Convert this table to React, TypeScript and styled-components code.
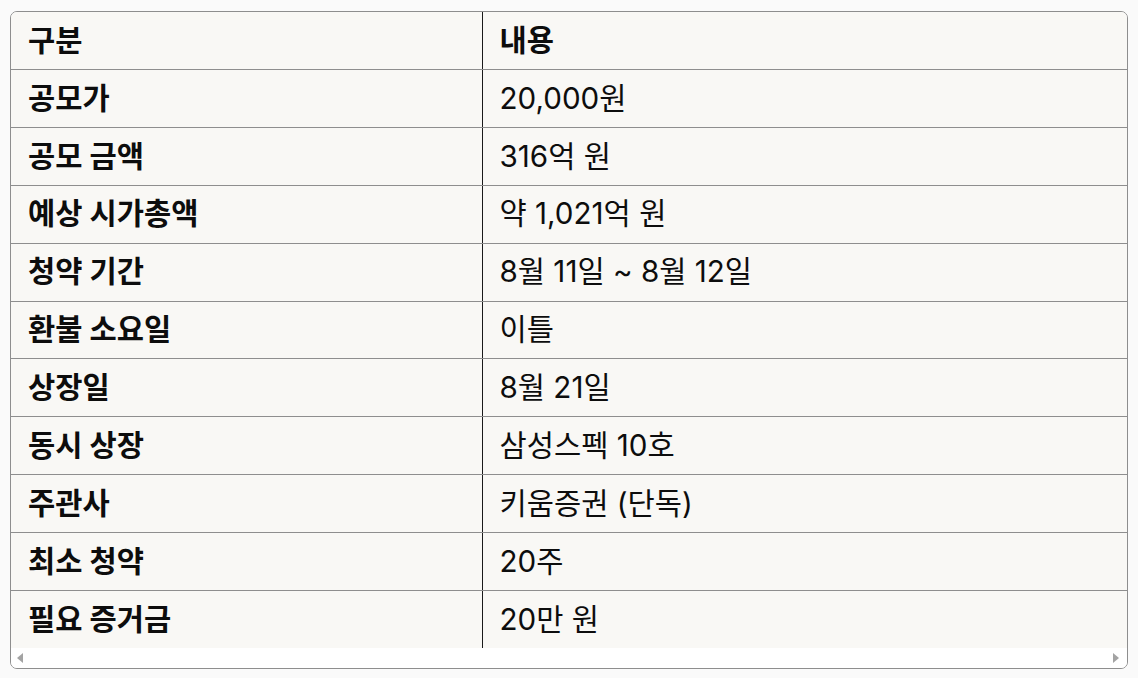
import React from 'react';
import styled, { createGlobalStyle } from 'styled-components';

const GlobalStyle = createGlobalStyle`
  html, body {
    margin: 0;
    padding: 0;
    background: #fafafa;
  }
  body {
    font-family: Inter, "Noto Sans CJK KR", sans-serif;
    color: #0d0d0d;
  }
`;

const Page = styled.div`
  padding: 11px 10px 10px 10px;
`;

const Frame = styled.div`
  border: 1px solid #8e8e8e;
  border-radius: 7px;
  overflow: hidden;
  background: #ffffff;
  width: 1116px;
`;

const Table = styled.table`
  width: 100%;
  border-collapse: collapse;
  background: #f9f8f5;
  table-layout: fixed;

  col.key {
    width: 471px;
  }

  th, td {
    height: 57px;
    padding: 0 17px;
    text-align: left;
    font-size: 29.6px;
    line-height: 1;
    border-bottom: 1px solid #8e8e8e;
  }

  td {
    height: 56.9px;
  }

  th:first-child, td:first-child {
    border-right: 1px solid #1a1a1a;
  }

  th {
    font-weight: 700;
  }

  tr:last-child td {
    border-bottom: none;
  }
`;

const KeyCell = styled.td`
  font-weight: 700;
`;

const ValueCell = styled.td`
  font-weight: 400;
`;

const ScrollBar = styled.div`
  height: 20px;
  display: flex;
  align-items: center;
  justify-content: space-between;
  padding: 0 8px 0 6px;
  background: #ffffff;
`;

const Arrow = styled.span<{ $dir: 'left' | 'right' }>`
  width: 0;
  height: 0;
  border-top: 5px solid transparent;
  border-bottom: 5px solid transparent;
  ${({ $dir }) =>
    $dir === 'left'
      ? 'border-right: 6px solid #a3a3a3;'
      : 'border-left: 6px solid #a3a3a3;'}
`;

const rows: [string, string][] = [
  ['공모가', '20,000원'],
  ['공모 금액', '316억 원'],
  ['예상 시가총액', '약 1,021억 원'],
  ['청약 기간', '8월 11일 ~ 8월 12일'],
  ['환불 소요일', '이틀'],
  ['상장일', '8월 21일'],
  ['동시 상장', '삼성스펙 10호'],
  ['주관사', '키움증권 (단독)'],
  ['최소 청약', '20주'],
  ['필요 증거금', '20만 원'],
];

export default function App() {
  return (
    <>
      <GlobalStyle />
      <Page>
        <Frame>
          <Table>
            <colgroup>
              <col className="key" />
              <col />
            </colgroup>
            <thead>
              <tr>
                <th>구분</th>
                <th>내용</th>
              </tr>
            </thead>
            <tbody>
              {rows.map(([k, v]) => (
                <tr key={k}>
                  <KeyCell>{k}</KeyCell>
                  <ValueCell>{v}</ValueCell>
                </tr>
              ))}
            </tbody>
          </Table>
          <ScrollBar>
            <Arrow $dir="left" />
            <Arrow $dir="right" />
          </ScrollBar>
        </Frame>
      </Page>
    </>
  );
}
